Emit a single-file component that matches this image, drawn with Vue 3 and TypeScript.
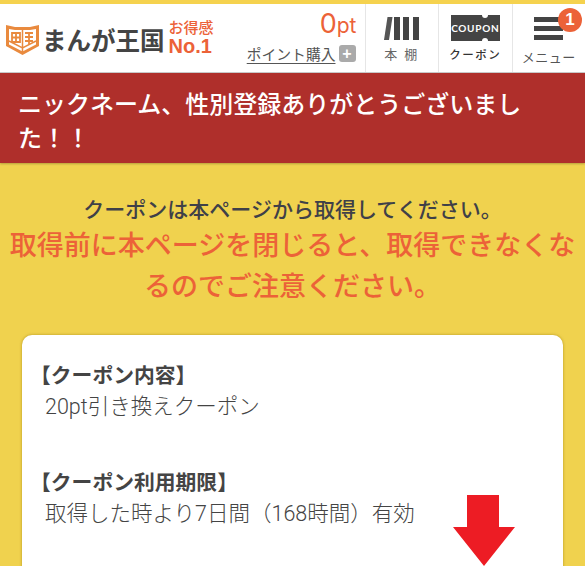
<template>
  <div class="page">
    <header class="site-header">
      <div class="logo">
        <svg class="logo-mark" width="33" height="30" viewBox="0 0 33 30">
          <path d="M0 0 L9 2 H24 L33 0 V21 L16.5 30 L0 21 Z" fill="#e98a3e" />
          <path d="M3 4 L9 5 H24 L30 4 V19.500 L16.5 26.500 L3 19.500 Z" fill="#fff" />
          <path d="M16.5 5 V27 M3 16 L16.5 23 L30 16" stroke="#e98a3e" stroke-width="1.500" fill="none" />
          <path d="M6 8 H14 V17 H6 Z M6 12.500 H14 M10 8 V17 M19 8 H27 M19 12 H27 M19 16 H27 M23 8 V19" stroke="#e98a3e" stroke-width="1.800" fill="none" />
        </svg>
        <span class="logo-name">まんが王国</span>
        <div class="logo-badge">
          <span class="badge-top">お得感</span>
          <span class="badge-no">No.1</span>
        </div>
      </div>
      <div class="points">
        <div class="pt-value"><span class="pt-num">0</span>pt</div>
        <div class="pt-buy"><span class="pt-link">ポイント購入</span><span class="pt-plus">+</span></div>
      </div>
      <nav class="nav">
        <div class="nav-item">
          <svg width="36" height="26" viewBox="0 0 36 26" fill="#444">
            <path d="M3.500 2 H8.500 L5 25 H0 Z" fill="#555" />
            <rect x="10" y="2" width="6" height="23" />
            <rect x="19" y="2" width="6" height="23" />
            <rect x="29" y="2" width="6" height="23" />
          </svg>
          <span class="nav-label shelf">本 棚</span>
        </div>
        <div class="nav-item">
          <div class="coupon-icon">COUPON</div>
          <span class="nav-label coupon">クーポン</span>
        </div>
        <div class="nav-item menu">
          <div class="menu-bars"><i></i><i></i><i></i></div>
          <span class="nav-label">メニュー</span>
          <span class="menu-badge">1</span>
        </div>
      </nav>
    </header>

    <div class="banner">ニックネーム、性別登録ありがとうございました！！</div>

    <main class="content">
      <p class="lead">クーポンは本ページから取得してください。</p>
      <p class="warn">取得前に本ページを閉じると、取得できなくなるのでご注意ください。</p>

      <section class="card">
        <div v-for="row in rows" :key="row.title" class="card-row">
          <h3>{{ row.title }}</h3>
          <p>{{ row.body }}</p>
        </div>
      </section>
    </main>

    <svg class="arrow" width="62" height="71" viewBox="0 0 62 71">
      <path d="M14 0 H46 V32 H62 L31 71 L0 32 H14 Z" fill="#ed1c24" />
    </svg>
  </div>
</template>

<script setup lang="ts">
const rows = [
  { title: '【クーポン内容】', body: '20pt引き換えクーポン' },
  { title: '【クーポン利用期限】', body: '取得した時より7日間（168時間）有効' }
]
</script>

<style>
html,
body {
  margin: 0;
  height: 100%;
  overflow: hidden;
  background: #f0d24e;
}
</style>

<style scoped>
.page {
  position: relative;
  height: 566px;
  overflow: hidden;
  font-family: "Noto Sans CJK JP", "Noto Sans", sans-serif;
  background: #f0d24e;
  color: #444;
}

.site-header {
  display: flex;
  align-items: stretch;
  box-sizing: border-box;
  height: 73px;
  border-top: 4px solid #f5d24e;
  border-bottom: 1px solid #ccc;
  background: #fff;
}

.logo {
  display: flex;
  align-items: center;
  padding-left: 6px;
  padding-top: 3px;
}

.logo-name {
  margin-left: 3px;
  font-size: 24.5px;
  font-weight: 700;
  color: #444;
  white-space: nowrap;
}

.logo-badge {
  display: flex;
  flex-direction: column;
  margin-left: 4px;
  margin-top: -4px;
  color: #ec6238;
  font-weight: 700;
  line-height: 1;
}

.badge-top {
  font-size: 15px;
  font-weight: 500;
}

.badge-no {
  font-family: "Liberation Sans", sans-serif;
  font-size: 20px;
  margin-top: 2px;
}

.points {
  flex: 1;
  display: flex;
  flex-direction: column;
  align-items: flex-end;
  padding-right: 8px;
}

.pt-value {
  color: #ec6238;
  font-family: "Inter", sans-serif;
  font-weight: 400;
  font-size: 21px;
  line-height: 40px;
  height: 41px;
}

.pt-num {
  font-size: 27px;
}

.pt-buy {
  display: flex;
  align-items: center;
  gap: 3px;
  margin-right: 1px;
  font-size: 14.800px;
  line-height: 17px;
  color: #555;
}

.pt-link {
  text-decoration: underline;
  text-underline-offset: 3px;
}

.pt-plus {
  display: flex;
  align-items: center;
  justify-content: center;
  width: 17px;
  height: 17px;
  border-radius: 3px;
  background: #aaa;
  color: #fff;
  font-family: "Liberation Sans", sans-serif;
  font-size: 16px;
  font-weight: 700;
}

.nav {
  display: flex;
}

.nav-item {
  position: relative;
  display: flex;
  flex-direction: column;
  align-items: center;
  box-sizing: border-box;
  width: 73.500px;
  padding-top: 11px;
  border-left: 1px solid #e6e6e6;
}

.nav-item svg {
  display: block;
  height: 26px;
}

.nav-label {
  margin-top: 4px;
  font-size: 12.500px;
  line-height: 18px;
  color: #555;
  white-space: nowrap;
}

.shelf {
  font-size: 13px;
  letter-spacing: 2px;
  color: #666;
}

.coupon {
  font-size: 11.500px;
  letter-spacing: 1.500px;
  color: #333;
  font-weight: 500;
}

.coupon-icon {
  position: relative;
  display: flex;
  align-items: center;
  justify-content: center;
  width: 49px;
  height: 26px;
  background: #444;
  color: #fff;
  font-family: "Lato", sans-serif;
  font-size: 10px;
  font-weight: 700;
  letter-spacing: 0.7px;
}

.coupon-icon::before,
.coupon-icon::after {
  content: "";
  position: absolute;
  left: 31px;
  width: 6px;
  height: 6px;
  border-radius: 50%;
  background: #fff;
}

.coupon-icon::before {
  top: -3px;
}

.coupon-icon::after {
  bottom: -3px;
}

.menu {
  padding-top: 13px;
}

.menu-bars {
  display: flex;
  flex-direction: column;
  gap: 4px;
  width: 29px;
}

.menu-bars i {
  display: block;
  height: 5px;
  background: #444;
}

.menu .nav-label {
  margin-top: 8px;
  font-size: 13px;
  letter-spacing: 0.5px;
}

.menu-badge {
  position: absolute;
  top: 4px;
  right: 3px;
  width: 24px;
  height: 24px;
  border-radius: 50%;
  background: #ec6238;
  color: #fff;
  font-family: "Liberation Sans", sans-serif;
  font-size: 17px;
  font-weight: 700;
  line-height: 24px;
  text-align: center;
}

.banner {
  box-sizing: border-box;
  height: 90px;
  padding: 13px 18px 0;
  background: #af2f2b;
  box-shadow: 0 1px 2px rgba(0, 0, 0, 0.25);
  color: #fff;
  font-size: 24px;
  font-weight: 500;
  line-height: 34px;
}

.content {
  padding-top: 30px;
}

.lead {
  margin: 0;
  font-size: 21px;
  font-weight: 500;
  line-height: 30px;
  text-align: center;
  color: #3f4048;
}

.warn {
  margin: 0 auto;
  padding: 0 9px;
  font-size: 27px;
  font-weight: 500;
  line-height: 41px;
  text-align: center;
  color: #ec6238;
}

.card {
  box-sizing: border-box;
  height: 300px;
  margin: 30px 22px 0;
  padding: 23px 8px;
  border-radius: 10px;
  background: #fff;
  box-shadow: 0 0 3px rgba(140, 110, 0, 0.6);
}

.card-row {
  height: 107px;
}

.card-row h3 {
  margin: 0;
  font-size: 20.800px;
  font-weight: 700;
  line-height: 32px;
  color: #444;
}

.card-row p {
  margin: 2px 0 0 15px;
  font-family: "Roboto", "Noto Sans CJK JP", sans-serif;
  font-size: 21.500px;
  font-weight: 300;
  line-height: 30px;
  color: #444;
}

.arrow {
  position: absolute;
  left: 453px;
  top: 495px;
}
</style>
